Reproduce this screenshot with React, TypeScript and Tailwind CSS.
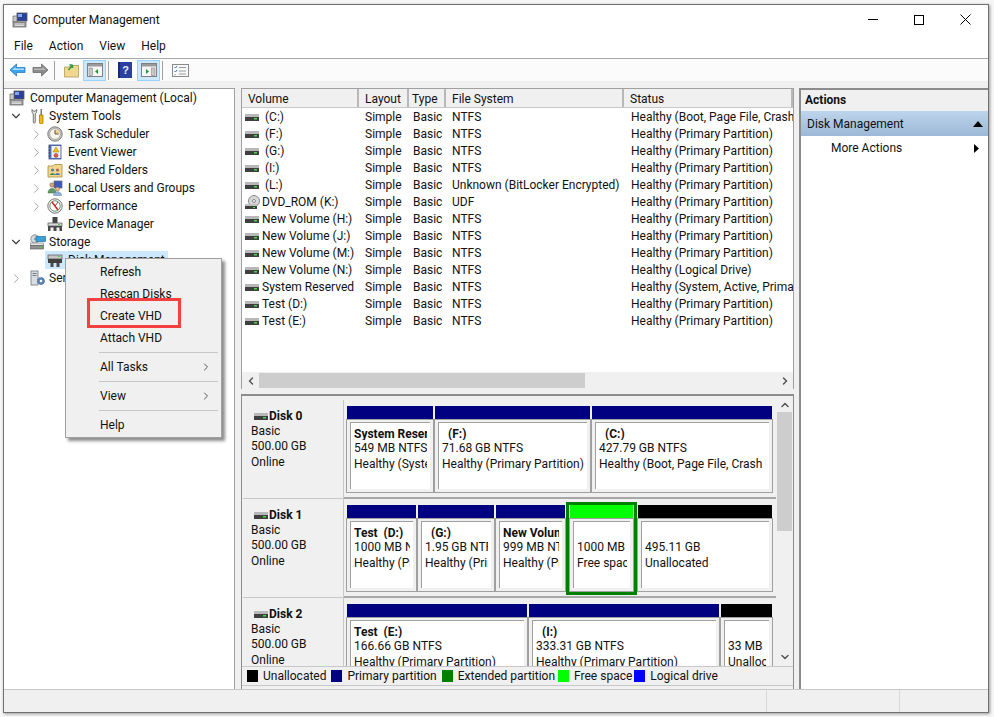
import { ChevronRight, ChevronDown, ChevronLeft, ChevronUp } from "lucide-react";

const volumes = [
  [" (C:)", "Simple", "Basic", "NTFS", "Healthy (Boot, Page File, Crash Dump, Primary Partition)"],
  [" (F:)", "Simple", "Basic", "NTFS", "Healthy (Primary Partition)"],
  [" (G:)", "Simple", "Basic", "NTFS", "Healthy (Primary Partition)"],
  [" (I:)", "Simple", "Basic", "NTFS", "Healthy (Primary Partition)"],
  [" (L:)", "Simple", "Basic", "Unknown (BitLocker Encrypted)", "Healthy (Primary Partition)"],
  ["DVD_ROM (K:)", "Simple", "Basic", "UDF", "Healthy (Primary Partition)"],
  ["New Volume (H:)", "Simple", "Basic", "NTFS", "Healthy (Primary Partition)"],
  ["New Volume (J:)", "Simple", "Basic", "NTFS", "Healthy (Primary Partition)"],
  ["New Volume (M:)", "Simple", "Basic", "NTFS", "Healthy (Primary Partition)"],
  ["New Volume (N:)", "Simple", "Basic", "NTFS", "Healthy (Logical Drive)"],
  ["System Reserved", "Simple", "Basic", "NTFS", "Healthy (System, Active, Primary Partition)"],
  ["Test (D:)", "Simple", "Basic", "NTFS", "Healthy (Primary Partition)"],
  ["Test (E:)", "Simple", "Basic", "NTFS", "Healthy (Primary Partition)"],
];

const headers = [
  { label: "Volume", pad: "pl-[6px]" },
  { label: "Layout", pad: "pl-[6px]" },
  { label: "Type", pad: "pl-[3px]" },
  { label: "File System", pad: "pl-[6px]" },
  { label: "Status", pad: "pl-[6px]" },
];

function DiskIcon() {
  return (
    <svg width="14" height="9" viewBox="0 0 14 9" className="shrink-0">
      <rect x="0" y="1" width="14" height="3" fill="#b8b8b8" />
      <rect x="0" y="4" width="14" height="4" fill="#3f3f3f" />
      <rect x="9" y="5" width="3" height="1.5" fill="#3fdc3f" />
    </svg>
  );
}

function DvdIcon() {
  return (
    <svg width="15" height="15" viewBox="0 0 15 15" className="shrink-0">
      <circle cx="9" cy="6" r="5.5" fill="#d8d8d8" stroke="#8a8a8a" />
      <circle cx="9" cy="6" r="1.5" fill="#fff" stroke="#888" />
      <rect x="0" y="9" width="12" height="2" fill="#c0c0c0" />
      <rect x="0" y="11" width="12" height="3" fill="#3f3f3f" />
      <rect x="8" y="12" width="2" height="1" fill="#3fdc3f" />
    </svg>
  );
}

function ComputerIcon() {
  return (
    <svg width="16" height="16" viewBox="0 0 16 16" className="shrink-0">
      <rect x="5" y="1" width="10" height="8" fill="#2b3f9e" stroke="#555" strokeWidth="0.8" />
      <rect x="6" y="2" width="4" height="3" fill="#7fa6ee" />
      <path d="M1 4h4v6H1z" fill="#c9c9c9" stroke="#666" strokeWidth="0.7" />
      <rect x="1" y="10" width="13" height="5" fill="#a5a5a5" stroke="#5a5a5a" strokeWidth="0.7" />
      <path d="M3 12h9M3 13.5h9" stroke="#efefef" strokeWidth="0.7" />
    </svg>
  );
}

function ToolsIcon() {
  return (
    <svg width="16" height="16" viewBox="0 0 16 16" className="shrink-0">
      <path d="M2 1.500v3l1.300 1.200V14a1 1 0 0 0 2 0V5.700L6.600 4.500v-3L5.200 3.200H3.400z" fill="#e6e6e6" stroke="#555" strokeWidth="0.8" />
      <rect x="10.500" y="1" width="1.500" height="6" fill="#777" />
      <path d="M9.500 7H13v7.500a1.700 1.700 0 0 1-3.500 0z" fill="#f2b90f" stroke="#9a6c00" strokeWidth="0.7" />
    </svg>
  );
}

function ClockIcon() {
  return (
    <svg width="16" height="16" viewBox="0 0 16 16" className="shrink-0">
      <circle cx="8" cy="8" r="7.200" fill="#c9c9c4" stroke="#7b7b7b" />
      <circle cx="8" cy="8" r="5.400" fill="#f8f6ea" stroke="#8a8a8a" strokeWidth="0.6" />
      <path d="M8 8V3.500A4.500 4.500 0 0 1 12.500 8z" fill="#f0cf8c" />
      <path d="M8 4v4h3.500" fill="none" stroke="#555" />
    </svg>
  );
}

function EventIcon() {
  return (
    <svg width="16" height="16" viewBox="0 0 16 16" className="shrink-0">
      <rect x="2" y="1" width="12" height="14" fill="#5d78c0" stroke="#3a4f88" strokeWidth="0.8" />
      <rect x="4.500" y="2" width="9" height="12" fill="#eef1f8" />
      <path d="M9 3l3 5H6z" fill="#f4c20d" stroke="#9a7a00" strokeWidth="0.5" />
      <circle cx="9" cy="11.500" r="2" fill="#e8584f" stroke="#8c2a25" strokeWidth="0.5" />
      <path d="M1.500 3h2M1.500 6h2M1.500 9h2M1.500 12h2" stroke="#333" strokeWidth="0.8" />
    </svg>
  );
}

function SharedIcon() {
  return (
    <svg width="16" height="16" viewBox="0 0 16 16" className="shrink-0">
      <path d="M1 4h5l1.500-1.500H15V15H1z" fill="#f0d78c" stroke="#a98b3c" strokeWidth="0.8" />
      <circle cx="5.500" cy="8" r="1.600" fill="#5c7ea8" />
      <path d="M3 13c0-2.500 5-2.500 5 0z" fill="#3c8a5a" />
      <circle cx="10.500" cy="8" r="1.600" fill="#a86b4c" />
      <path d="M8 13c0-2.500 5-2.500 5 0z" fill="#4a6fb3" />
    </svg>
  );
}

function UsersIcon() {
  return (
    <svg width="16" height="16" viewBox="0 0 16 16" className="shrink-0">
      <rect x="7" y="1" width="8" height="7" fill="#3d5cc0" stroke="#666" strokeWidth="0.7" />
      <circle cx="5" cy="5" r="2.200" fill="#d6a878" stroke="#7a5a3a" strokeWidth="0.5" />
      <path d="M1 13c0-6 8-6 8 0z" fill="#5f9a62" stroke="#3f6a42" strokeWidth="0.5" />
      <circle cx="10.500" cy="9" r="2" fill="#e0ba92" stroke="#7a5a3a" strokeWidth="0.5" />
      <path d="M6.500 15.500c0-5 8-5 8 0z" fill="#8fb1d8" stroke="#5b7ea8" strokeWidth="0.5" />
    </svg>
  );
}

function PerfIcon() {
  return (
    <svg width="16" height="16" viewBox="0 0 16 16" className="shrink-0">
      <circle cx="8" cy="8" r="7.200" fill="#f2f2ee" stroke="#777" />
      <circle cx="8" cy="8" r="5.200" fill="#fff" stroke="#2d6b3c" strokeWidth="0.7" />
      <path d="M5 4l6 8" stroke="#d8291f" strokeWidth="1.500" />
      <path d="M8 8l3-4" stroke="#333" strokeWidth="0.8" />
    </svg>
  );
}

function DeviceIcon() {
  return (
    <svg width="16" height="16" viewBox="0 0 16 16" className="shrink-0">
      <rect x="5.500" y="1" width="5" height="6" fill="#444" />
      <rect x="1" y="7" width="14" height="3" fill="#d8d8d8" stroke="#555" strokeWidth="0.7" />
      <rect x="1" y="10" width="14" height="5" fill="#4a4a4a" />
      <rect x="3.500" y="11.500" width="3" height="3.500" fill="#f2f2f2" />
      <rect x="9.500" y="11.500" width="3" height="3.500" fill="#f2f2f2" />
      <rect x="11" y="8" width="2" height="1" fill="#3fdc3f" />
    </svg>
  );
}

function DiskMgmtIcon() {
  return (
    <svg width="16" height="16" viewBox="0 0 16 16" className="shrink-0">
      <rect x="1" y="3" width="14" height="4" fill="#c4c4c4" stroke="#555" strokeWidth="0.7" />
      <rect x="1" y="7" width="14" height="4" fill="#3f3f3f" />
      <rect x="11" y="4" width="2" height="1" fill="#3fdc3f" />
      <rect x="3.500" y="11" width="3" height="4" fill="#4a4a4a" />
      <rect x="9.500" y="11" width="3" height="4" fill="#4a4a4a" />
    </svg>
  );
}

function StorageIcon() {
  return (
    <svg width="16" height="16" viewBox="0 0 16 16" className="shrink-0">
      <circle cx="5" cy="5" r="4.200" fill="#d5dbe0" stroke="#7c7c7c" strokeWidth="0.8" />
      <circle cx="5" cy="5" r="1.200" fill="#8aa" />
      <rect x="6" y="2.500" width="9.500" height="5" fill="#3aa0d8" stroke="#2a6f98" strokeWidth="0.7" />
      <rect x="0.500" y="9" width="13" height="2.500" fill="#e4e4e4" stroke="#777" strokeWidth="0.6" />
      <rect x="0.500" y="11.500" width="13" height="3.500" fill="#909090" stroke="#555" strokeWidth="0.6" />
      <rect x="10" y="12.500" width="2" height="1" fill="#3fdc3f" />
    </svg>
  );
}

function ServicesIcon() {
  return (
    <svg width="16" height="16" viewBox="0 0 16 16" className="shrink-0">
      <rect x="1" y="1" width="7" height="14" fill="#d8dde2" stroke="#6d7680" strokeWidth="0.8" />
      <path d="M2.500 3.500h4M2.500 5.500h4" stroke="#5a6570" strokeWidth="0.8" />
      <circle cx="11" cy="11" r="3.500" fill="#5b84b8" stroke="#3a5a88" strokeWidth="0.8" strokeDasharray="1.500 0.800" />
      <circle cx="11" cy="11" r="1.300" fill="#fff" />
    </svg>
  );
}

function BackArrow({ blue }: { blue?: boolean }) {
  return (
    <svg width="17" height="14" viewBox="0 0 17 14" className="shrink-0">
      {blue ? (
        <>
          <path d="M1 7l6.500-6v3.500H16v5H7.500V13z" fill="#3aa4f2" stroke="#2b7cc0" strokeWidth="0.8" />
          <path d="M3 7l3.500-3v1.500H15V7z" fill="#a8dcfc" />
        </>
      ) : (
        <>
          <path d="M16 7L9.500 1v3.500H1v5h8.500V13z" fill="#8c8c8c" stroke="#6a6a6a" strokeWidth="0.8" />
          <path d="M14 7l-3.500-3v1.500H2V7z" fill="#b8b8b8" />
        </>
      )}
    </svg>
  );
}

function PaneIcon({ right }: { right?: boolean }) {
  return (
    <span className="flex h-[21px] w-[23px] shrink-0 items-center justify-center border border-[#99d1ff] bg-[#cce8ff]">
      <svg width="16" height="14" viewBox="0 0 16 14">
        <rect x="0.500" y="0.500" width="15" height="13" fill="#f6f6f6" stroke="#808080" />
        <rect x="1" y="1" width="14" height="2.500" fill="#9a9a9a" />
        {right ? (
          <>
            <path d="M5 6l3 2.500L5 11z" fill="#1f9a3a" />
            <rect x="10.500" y="5" width="3.500" height="7.500" fill="#c8c8c8" stroke="#7a7a7a" strokeWidth="0.5" />
          </>
        ) : (
          <>
            <rect x="2" y="5" width="3.500" height="7.500" fill="#c8c8c8" stroke="#7a7a7a" strokeWidth="0.5" />
            <path d="M11 6L8 8.500 11 11z" fill="#1f9a3a" />
          </>
        )}
      </svg>
    </span>
  );
}

function ToolSep() {
  return <span className="ml-[2px] mr-[9px] h-[19px] w-px bg-[#a0a0a0]" />;
}

function TreeRow({ arrow, indent, icon, label, selected }: { arrow?: "open" | "closed"; indent: "root" | "one" | "two"; icon: React.ReactNode; label: string; selected?: boolean }) {
  return (
    <div className={`flex h-[18px] items-center ${indent === "two" ? "pl-[20px]" : ""}`}>
      {indent !== "root" && (
        <span className={`flex w-[18px] shrink-0 justify-center ${indent === "one" ? "mr-[3px]" : ""}`}>
          {arrow === "open" && <ChevronDown size={14} strokeWidth={2} className="text-[#404040]" />}
          {arrow === "closed" && <ChevronRight size={15} strokeWidth={1.500} className="text-[#a0a0a0]" />}
        </span>
      )}
      <span className={`flex h-[18px] items-center pl-[2px] pr-[3px] ${indent === "one" ? "gap-[3px]" : "gap-[5px]"} ${selected ? "bg-[#cce8ff]" : ""}`}>
        {icon}
        <span className="whitespace-nowrap">{label}</span>
      </span>
    </div>
  );
}

function Partition({ width, bar, lines, bold, outlined }: { width: string; bar: string; lines: string[]; bold?: string; outlined?: boolean }) {
  return (
    <div className={`${width} flex shrink-0 flex-col ${outlined ? "z-10 -mt-[3px] h-[93px] border-[3px] border-[#008000]" : "h-[87px]"}`}>
      <div className={`h-[13px] shrink-0 ${bar} mx-px`} />
      <div className="min-h-0 flex-1 border border-[#a0a0a0] bg-[#f0f0f0] px-[3px] pb-[3px] pt-[2px]">
        <div className="h-full overflow-hidden border-l border-t border-[#a0a0a0] bg-white pl-[3px] pr-[3px] pt-[3px]">
          <div className="h-[14px] overflow-hidden whitespace-pre font-bold leading-[17px]">{bold ?? ""}</div>
          {lines.map((l) => (
            <div key={l} className="h-[16px] overflow-hidden whitespace-nowrap leading-[16px]">{l}</div>
          ))}
        </div>
      </div>
    </div>
  );
}

function DiskRow({ name, children, last }: { name: string; children: React.ReactNode; last?: boolean }) {
  return (
    <div className="flex h-[99px] shrink-0">
      <div className={`w-[101px] shrink-0 border-r border-[#c8c8c8] bg-[#f0f0f0] pl-[8px] pt-[9px] ${last ? "" : "border-b"}`}>
        <div className="flex h-[15px] items-center gap-[1px] pl-[3px] font-bold">
          <DiskIcon />
          <span>{name}</span>
        </div>
        <div className="h-[15px]">Basic</div>
        <div className="h-[15px]">500.00 GB</div>
        <div className="h-[16px] leading-[17px]">Online</div>
      </div>
      <div className={`flex-1 bg-[#f0f0f0] pl-[2px] pt-[6px] ${last ? "" : "border-b-2 border-[#a8a8a8]"}`}>
        <div className="flex">{children}</div>
      </div>
    </div>
  );
}

function Legend({ color, label, shift }: { color: string; label: string; shift?: string }) {
  return (
    <span className={`flex items-center gap-[5px] ${shift ?? ""}`}>
      <span className={`h-[12px] w-[11px] ${color}`} />
      <span>{label}</span>
    </span>
  );
}

function MenuItem({ label, more }: { label: string; more?: boolean }) {
  return (
    <div className="flex h-[22px] items-center justify-between pl-[34px] pr-[9px]">
      <span>{label}</span>
      {more && <ChevronRight size={12} className="text-[#555]" />}
    </div>
  );
}

export default function App() {
  return (
    <div className="h-[717px] w-[994px] overflow-hidden bg-[#f7f7f7] pb-[4px] pl-[3px] pr-[5px] pt-[4px] font-[Roboto,sans-serif] text-[12px] leading-[15px] text-[#111]">
      <div className="relative flex h-full flex-col border border-[#707070] bg-white shadow-[1px_1px_3px_rgba(0,0,0,0.4)]">
        {/* title bar */}
        <div className="flex h-[29px] shrink-0 items-center justify-between">
          <div className="flex items-center gap-[5px] pl-[8px] pt-[1px]">
            <ComputerIcon />
            <span>Computer Management</span>
          </div>
          <div className="flex items-center">
            <span className="flex h-[29px] w-[46px] items-center justify-center"><span className="h-px w-[10px] bg-black" /></span>
            <span className="flex h-[29px] w-[46px] items-center justify-center"><span className="h-[10px] w-[10px] border border-black" /></span>
            <span className="flex h-[29px] w-[46px] items-center justify-center">
              <svg width="11" height="11" viewBox="0 0 11 11"><path d="M0.500 0.500l10 10M10.500 0.500l-10 10" stroke="#000" /></svg>
            </span>
          </div>
        </div>
        {/* menu */}
        <div className="flex h-[24px] shrink-0 items-center gap-[16px] pl-[10px]">
          <span>File</span>
          <span>Action</span>
          <span>View</span>
          <span>Help</span>
        </div>
        {/* toolbar */}
        <div className="flex h-[23px] shrink-0 items-center border-t border-[#a8a8a8] bg-[#fbfbfb] pl-[5px]">
          <span className="mr-[3px] flex gap-[6px]"><BackArrow blue /><BackArrow /></span>
          <ToolSep />
          <svg width="15" height="15" viewBox="0 0 15 15" className="mr-[4px] shrink-0">
            <path d="M0.500 4h5l1-1.500h8V14H0.500z" fill="#f2d88e" stroke="#b09a5a" strokeWidth="0.8" />
            <path d="M4.500 7l4-5M8.500 2h-3M8.500 2v3" stroke="#2ea043" strokeWidth="1.600" fill="none" />
          </svg>
          <PaneIcon />
          <ToolSep />
          <svg width="14" height="16" viewBox="0 0 14 16" className="mr-[5px] shrink-0">
            <rect width="14" height="16" fill="#2b3fa0" />
            <rect width="2" height="16" fill="#1c2a70" />
            <text x="7.500" y="12" textAnchor="middle" fontSize="11" fontWeight="700" fill="#e8ecff" fontFamily="Liberation Sans">?</text>
          </svg>
          <PaneIcon right />
          <ToolSep />
          <svg width="17" height="13" viewBox="0 0 17 13" className="shrink-0">
            <rect x="0.500" y="0.500" width="16" height="12" fill="#f8f8f8" stroke="#8a8a8a" />
            <path d="M2.500 3l1 1 1.500-2M2.500 7l1 1 1.500-2M2.500 11l1-.5" stroke="#3a7ab8" fill="none" />
            <path d="M7 3.500h7M7 7h7M7 10h7" stroke="#9a9a9a" />
          </svg>
        </div>
        {/* panes */}
        <div className="flex min-h-0 flex-1 bg-[#f0f0f0] pt-[7px]">
          <div className="w-[231px] shrink-0 border-r border-t border-[#a0a0a0] bg-white pl-[3px]">
            <TreeRow indent="root" icon={<ComputerIcon />} label="Computer Management (Local)" />
            <TreeRow indent="one" arrow="open" icon={<ToolsIcon />} label="System Tools" />
            <TreeRow indent="two" arrow="closed" icon={<ClockIcon />} label="Task Scheduler" />
            <TreeRow indent="two" arrow="closed" icon={<EventIcon />} label="Event Viewer" />
            <TreeRow indent="two" arrow="closed" icon={<SharedIcon />} label="Shared Folders" />
            <TreeRow indent="two" arrow="closed" icon={<UsersIcon />} label="Local Users and Groups" />
            <TreeRow indent="two" arrow="closed" icon={<PerfIcon />} label="Performance" />
            <TreeRow indent="two" icon={<DeviceIcon />} label="Device Manager" />
            <TreeRow indent="one" arrow="open" icon={<StorageIcon />} label="Storage" />
            <TreeRow indent="two" icon={<DiskMgmtIcon />} label="Disk Management" selected />
            <TreeRow indent="one" arrow="closed" icon={<ServicesIcon />} label="Services and Applications" />
          </div>

          <div className="ml-[6px] flex w-[553px] shrink-0 flex-col">
            {/* volume list */}
            <div className="flex h-[301px] shrink-0 flex-col border-x border-t border-[#a0a0a0] bg-white">
              <div className="grid h-[19px] shrink-0 grid-cols-[117px_50px_37px_178px_1fr] border-b border-[#c8c8c8] bg-[#f0f0f0]">
                {headers.map((h) => (
                  <div key={h.label} className={`flex items-center border-r-2 border-[#b8b8b8] pt-[2px] ${h.pad}`}>{h.label}</div>
                ))}
              </div>
              <div className="flex-1 overflow-hidden pt-[1px]">
                {volumes.map((v) => (
                  <div key={v[0]} className="grid h-[17px] grid-cols-[117px_50px_37px_178px_1fr] items-center">
                    {v[0].startsWith("DVD") ? (
                      <div className="flex items-center gap-[2px] whitespace-pre pl-[3px]">
                        <DvdIcon />
                        <span>{v[0]}</span>
                      </div>
                    ) : (
                      <div className="flex items-center gap-[3px] whitespace-pre pl-[3px]">
                        <DiskIcon />
                        <span>{v[0]}</span>
                      </div>
                    )}
                    <div className="pl-[6px]">{v[1]}</div>
                    <div className="pl-[4px]">{v[2]}</div>
                    <div className="whitespace-nowrap pl-[6px]">{v[3]}</div>
                    <div className="overflow-hidden whitespace-nowrap pl-[7px]">{v[4]}</div>
                  </div>
                ))}
              </div>
              <div className="flex h-[17px] shrink-0 items-center bg-[#f0f0f0]">
                <span className="flex w-[17px] justify-center"><ChevronLeft size={12} strokeWidth={3} className="text-[#555]" /></span>
                <span className="h-[15px] w-[326px] bg-[#cdcdcd]" />
                <span className="flex-1" />
                <span className="flex w-[16px] justify-center"><ChevronRight size={12} strokeWidth={3} className="text-[#555]" /></span>
              </div>
            </div>
            {/* splitter */}
            <div className="h-[5px] shrink-0 bg-[#f0f0f0]" />
            {/* disk map */}
            <div className="flex min-h-0 flex-1 flex-col border-x border-t-2 border-[#8c8c8c]">
              <div className="flex h-[270px] shrink-0">
                <div className="flex-1 overflow-hidden bg-[#f0f0f0] pl-px pt-[4px]">
                  <DiskRow name="Disk 0">
                    <Partition width="w-[88px]" bar="bg-[#000080]" bold="System Reserved" lines={["549 MB NTFS", "Healthy (System, Active)"]} />
                    <Partition width="w-[157px]" bar="bg-[#000080]" bold="  (F:)" lines={["71.68 GB NTFS", "Healthy (Primary Partition)"]} />
                    <Partition width="w-[182px]" bar="bg-[#000080]" bold="  (C:)" lines={["427.79 GB NTFS", "Healthy (Boot, Page File, Crash Dump)"]} />
                  </DiskRow>
                  <DiskRow name="Disk 1">
                    <Partition width="w-[71px]" bar="bg-[#000080]" bold="Test  (D:)" lines={["1000 MB NTFS", "Healthy (Primary)"]} />
                    <Partition width="w-[78px]" bar="bg-[#000080]" bold="  (G:)" lines={["1.95 GB NTFS", "Healthy (Primary)"]} />
                    <Partition width="w-[71px]" bar="bg-[#000080]" bold="New Volume" lines={["999 MB NTFS", "Healthy (Primary)"]} />
                    <Partition width="w-[71px]" bar="bg-[#00ff00]" outlined lines={["1000 MB", "Free space"]} />
                    <Partition width="w-[136px]" bar="bg-black" lines={["495.11 GB", "Unallocated"]} />
                  </DiskRow>
                  <DiskRow name="Disk 2" last>
                    <Partition width="w-[182px]" bar="bg-[#000080]" bold="Test  (E:)" lines={["166.66 GB NTFS", "Healthy (Primary Partition)"]} />
                    <Partition width="w-[192px]" bar="bg-[#000080]" bold="  (I:)" lines={["333.31 GB NTFS", "Healthy (Primary Partition)"]} />
                    <Partition width="w-[53px]" bar="bg-black" lines={["33 MB", "Unallocated"]} />
                  </DiskRow>
                </div>
                <div className="flex w-[17px] shrink-0 flex-col items-center bg-[#f0f0f0]">
                  <ChevronUp size={12} strokeWidth={3} className="mt-[3px] text-[#555]" />
                  <span className="mt-[1px] h-[119px] w-[15px] bg-[#cdcdcd]" />
                  <span className="flex-1" />
                  <ChevronDown size={12} strokeWidth={3} className="mb-[3px] text-[#555]" />
                </div>
              </div>
              <div className="flex h-[20px] shrink-0 items-center gap-[5px] border-y border-[#c8c8c8] bg-[#f0f0f0] pl-[5px]">
                <Legend color="bg-black" label="Unallocated" />
                <Legend color="bg-[#000080]" label="Primary partition" />
                <Legend color="bg-[#008000]" label="Extended partition" />
                <Legend color="bg-[#00ff00]" label="Free space" shift="-ml-[2px]" />
                <Legend color="bg-[#0000ff]" label="Logical drive" shift="-ml-[3px]" />
              </div>
            </div>
          </div>

          <div className="ml-[5px] flex-1 border-l-2 border-t-2 border-[#8c8c8c] bg-white">
            <div className="flex h-[21px] items-center bg-[#f0f0f0] pl-[4px] font-bold">Actions</div>
            <div className="flex h-[25px] items-center justify-between bg-gradient-to-b from-[#bdd5ec] to-[#9db8d6] pl-[6px] pr-[5px] pt-[1px]">
              <span>Disk Management</span>
              <svg width="10" height="6" viewBox="0 0 10 6"><path d="M5 0l5 6H0z" fill="#000" /></svg>
            </div>
            <div className="flex h-[25px] items-center justify-between pl-[30px] pr-[9px]">
              <span>More Actions</span>
              <svg width="5" height="9" viewBox="0 0 5 9"><path d="M0 0l5 4.500L0 9z" fill="#000" /></svg>
            </div>
          </div>
        </div>
        {/* status bar */}
        <div className="flex h-[23px] shrink-0 items-stretch border-t border-[#c8c8c8] bg-[#f0f0f0]">
          <span className="w-[763px] border-r border-[#d8d8d8]" />
          <span className="w-[133px] border-r border-[#d8d8d8]" />
        </div>

        {/* context menu */}
        <div className="absolute left-[61px] top-[253px] z-20 h-[180px] w-[157px] border border-[#a0a0a0] bg-[#f0f0f0] py-[2px] shadow-[3px_3px_3px_rgba(0,0,0,0.45)]">
          <MenuItem label="Refresh" />
          <MenuItem label="Rescan Disks" />
          <MenuItem label="Create VHD" />
          <MenuItem label="Attach VHD" />
          <div className="my-[3px] ml-[33px] mr-[3px] h-px bg-[#c8c8c8]" />
          <MenuItem label="All Tasks" more />
          <div className="my-[3px] ml-[33px] mr-[3px] h-px bg-[#c8c8c8]" />
          <MenuItem label="View" more />
          <div className="my-[3px] ml-[33px] mr-[3px] h-px bg-[#c8c8c8]" />
          <MenuItem label="Help" />
          <div className="absolute left-[21px] top-[39px] h-[30px] w-[94px] border-[3px] border-[#f44040]" />
        </div>
      </div>
    </div>
  );
}
